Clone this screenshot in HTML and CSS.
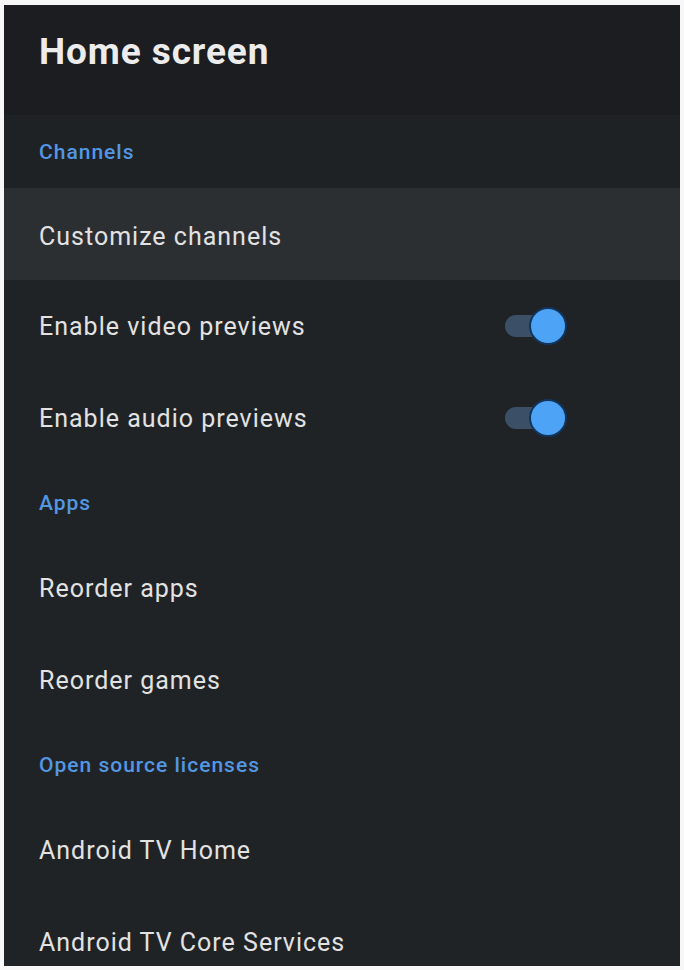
FILE: index.html
```html
<!DOCTYPE html>
<html lang="en">
<head>
<meta charset="utf-8">
<title>Home screen</title>
<link rel="stylesheet" href="styles.css">
</head>
<body>
<div class="panel">
  <header class="panel-header">
    <h1 class="title">Home screen</h1>
  </header>
  <div class="category category-first">Channels</div>
  <div class="item item-focused">Customize channels</div>
  <div class="item">
    <span>Enable video previews</span>
    <span class="toggle"><span class="track"></span><span class="thumb"></span></span>
  </div>
  <div class="item">
    <span>Enable audio previews</span>
    <span class="toggle"><span class="track"></span><span class="thumb"></span></span>
  </div>
  <div class="category">Apps</div>
  <div class="item">Reorder apps</div>
  <div class="item">Reorder games</div>
  <div class="category">Open source licenses</div>
  <div class="item">Android TV Home</div>
  <div class="item">Android TV Core Services</div>
</div>
</body>
</html>
```
FILE: styles.css
```css
html, body {
  margin: 0;
  padding: 0;
  background: #f7f7f7;
}
body {
  padding: 5px 4px 0 4px;
  height: 970px;
  box-sizing: border-box;
  overflow: hidden;
  font-family: Roboto, "Liberation Sans", sans-serif;
}
.panel {
  width: 676px;
  height: 961px;
  background: #202326;
  overflow: hidden;
  display: flex;
  flex-direction: column;
}
.panel-header {
  background: #1b1d20;
  height: 110px;
  flex: none;
  box-sizing: border-box;
  padding: 25px 35px 0;
}
.title {
  margin: 0;
  font-size: 37px;
  line-height: 44px;
  font-weight: 700;
  letter-spacing: 0.9px;
  color: #ececec;
}
.category {
  flex: none;
  height: 78px;
  display: flex;
  align-items: center;
  padding: 0 35px;
  font-size: 21px;
  font-weight: 500;
  letter-spacing: 1px;
  color: #5397e2;
}
.category-first {
  height: 73px;
  background: #1f2225;
}
.item {
  flex: none;
  height: 92px;
  display: flex;
  align-items: center;
  justify-content: space-between;
  padding: 0 113px 0 35px;
  font-size: 25px;
  letter-spacing: 1px;
  color: #e2e2e2;
}
.item-focused {
  background: #2c2f32;
  padding-top: 4px;
  box-sizing: border-box;
}
.toggle {
  position: relative;
  width: 62px;
  height: 38px;
  flex: none;
}
.track {
  position: absolute;
  left: 0;
  top: 8px;
  width: 52px;
  height: 22px;
  border-radius: 11px;
  background: #3b4f66;
}
.thumb {
  position: absolute;
  right: 0;
  top: 0;
  width: 38px;
  height: 38px;
  box-sizing: border-box;
  border-radius: 50%;
  background: #4da4f7;
  border: 2px solid #11355c;
}
```
